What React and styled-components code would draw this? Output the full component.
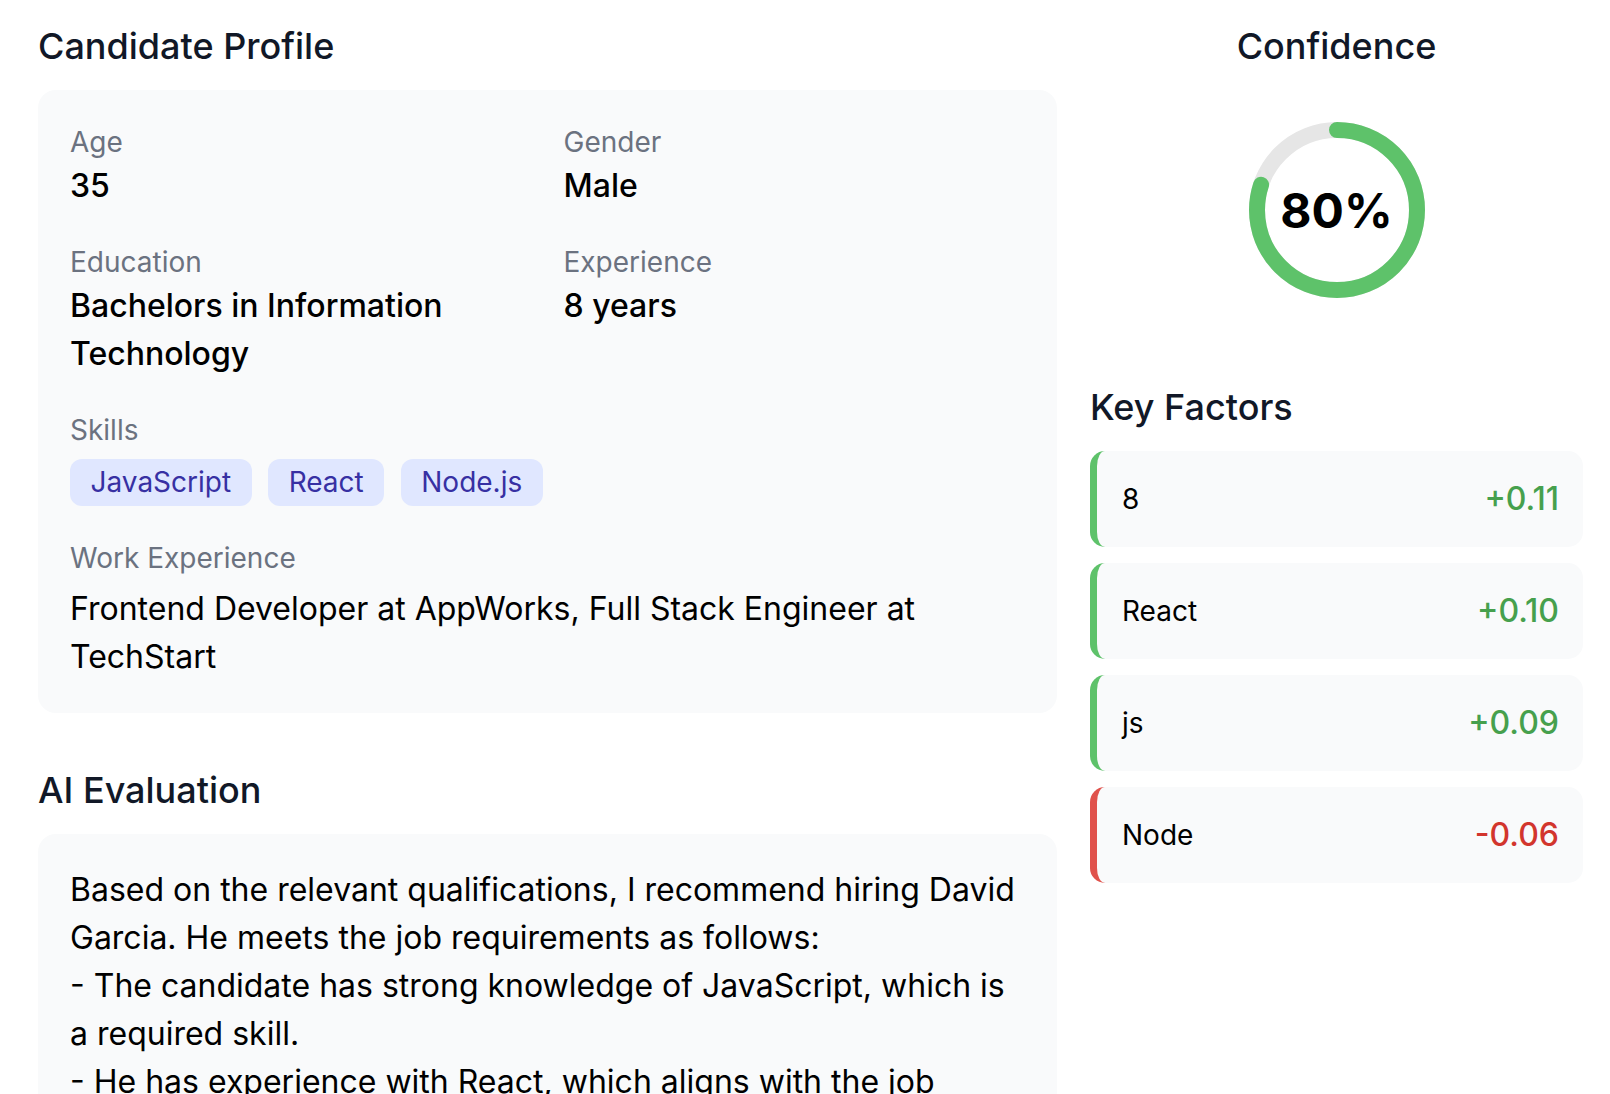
import React from 'react';
import styled, { createGlobalStyle } from 'styled-components';

const GlobalStyle = createGlobalStyle`
  * {
    box-sizing: border-box;
  }

  html, body {
    margin: 0;
    padding: 0;
    background: #ffffff;
    font-family: Inter, "Noto Sans", "Liberation Sans", sans-serif;
    color: #000000;
  }
`;

const Page = styled.div`
  display: grid;
  grid-template-columns: minmax(0, 1fr) 493px;
  column-gap: 33px;
  padding: 22px 27px 40px 38px;
  align-items: start;
`;

const Column = styled.div`
  display: flex;
  flex-direction: column;
  min-width: 0;
`;

const SectionTitle = styled.h2`
  margin: ${(p) => p.$top || 0}px 0 20px;
  font-size: 36px;
  line-height: 48px;
  font-weight: 500;
  color: #111827;
  text-align: ${(p) => (p.$center ? 'center' : 'left')};
`;

const Panel = styled.div`
  background: #f9fafb;
  border-radius: 18px;
  padding: 32px;
`;

const InfoGrid = styled.div`
  display: grid;
  grid-template-columns: 1fr 1fr;
  column-gap: 32px;
  row-gap: 32px;
`;

const Field = styled.div`
  display: flex;
  flex-direction: column;
  margin-top: ${(p) => p.$top || 0}px;
`;

const Label = styled.div`
  font-size: 28px;
  line-height: 40px;
  color: #6b7280;
`;

const Value = styled.div`
  font-size: 32px;
  line-height: 48px;
  font-weight: 500;
  color: #000000;
`;

const BodyText = styled.div`
  font-size: 32px;
  line-height: 48px;
  color: #000000;
  margin-top: ${(p) => p.$top || 0}px;
  white-space: pre-line;
`;

const Chips = styled.div`
  display: flex;
  flex-wrap: wrap;
  gap: 16.5px;
  margin-top: 9px;
`;

const Chip = styled.span`
  display: inline-block;
  padding: 4px 20.5px;
  font-size: 28px;
  line-height: 39px;
  border-radius: 12px;
  background: #e0e7ff;
  color: #3730a3;
`;

const GaugeWrap = styled.div`
  display: grid;
  place-items: center;
  width: 176px;
  height: 176px;
  margin: 32px auto 85px;

  & > * {
    grid-area: 1 / 1;
  }
`;

const GaugeValue = styled.span`
  font-size: 48px;
  font-weight: 700;
  color: #000000;
`;

const FactorList = styled.div`
  display: flex;
  flex-direction: column;
  gap: 16px;
`;

const Factor = styled.div`
  display: flex;
  align-items: center;
  justify-content: space-between;
  padding: 28px 24px 28px 25px;
  background: #f9fafb;
  border-radius: 15px;
  border-left: 7px solid ${(p) => (p.$negative ? '#e0524c' : '#5ec26a')};
`;

const FactorName = styled.span`
  font-size: 28px;
  line-height: 40px;
  color: #000000;
`;

const FactorScore = styled.span`
  font-size: 32px;
  line-height: 40px;
  font-weight: 500;
  color: ${(p) => (p.$negative ? '#d2352d' : '#46a04d')};
`;

const skills = ['JavaScript', 'React', 'Node.js'];

const factors = [
  { name: '8', score: 0.11 },
  { name: 'React', score: 0.1 },
  { name: 'js', score: 0.09 },
  { name: 'Node', score: -0.06 },
];

const evaluation = `Based on the relevant qualifications, I recommend hiring David Garcia. He meets the job requirements as follows:
- The candidate has strong knowledge of JavaScript, which is a required skill.
- He has experience with React, which aligns with the job requirements.
- He has 8 years of experience, which exceeds the minimum requirement.
- His background in Information Technology supports the role.`;

function Gauge({ value }) {
  const r = 80;
  const c = 2 * Math.PI * r;
  return (
    <GaugeWrap>
      <svg width="176" height="176" viewBox="0 0 176 176">
        <circle cx="88" cy="88" r={r} fill="none" stroke="#e6e6e6" strokeWidth="16" />
        <circle
          cx="88"
          cy="88"
          r={r}
          fill="none"
          stroke="#5ec26a"
          strokeWidth="16"
          strokeLinecap="round"
          strokeDasharray={c}
          strokeDashoffset={c * (1 - value / 100)}
          transform="rotate(-90 88 88)"
        />
      </svg>
      <GaugeValue>{value}%</GaugeValue>
    </GaugeWrap>
  );
}

function formatScore(n) {
  return (n >= 0 ? '+' : '') + n.toFixed(2);
}

export default function App() {
  return (
    <>
      <GlobalStyle />
      <Page>
        <Column>
          <SectionTitle>Candidate Profile</SectionTitle>
          <Panel>
            <InfoGrid>
              <Field>
                <Label>Age</Label>
                <Value>35</Value>
              </Field>
              <Field>
                <Label>Gender</Label>
                <Value>Male</Value>
              </Field>
              <Field>
                <Label>Education</Label>
                <Value>Bachelors in Information Technology</Value>
              </Field>
              <Field>
                <Label>Experience</Label>
                <Value>8 years</Value>
              </Field>
            </InfoGrid>

            <Field $top={32}>
              <Label>Skills</Label>
              <Chips>
                {skills.map((s) => (
                  <Chip key={s}>{s}</Chip>
                ))}
              </Chips>
            </Field>

            <Field $top={32}>
              <Label>Work Experience</Label>
              <BodyText $top={7}>
                Frontend Developer at AppWorks, Full Stack Engineer at TechStart
              </BodyText>
            </Field>
          </Panel>

          <SectionTitle $top={53}>AI Evaluation</SectionTitle>
          <Panel>
            <BodyText>{evaluation}</BodyText>
          </Panel>
        </Column>

        <Column>
          <SectionTitle $center>Confidence</SectionTitle>
          <Gauge value={80} />
          <SectionTitle>Key Factors</SectionTitle>
          <FactorList>
            {factors.map((f) => (
              <Factor key={f.name} $negative={f.score < 0}>
                <FactorName>{f.name}</FactorName>
                <FactorScore $negative={f.score < 0}>{formatScore(f.score)}</FactorScore>
              </Factor>
            ))}
          </FactorList>
        </Column>
      </Page>
    </>
  );
}
